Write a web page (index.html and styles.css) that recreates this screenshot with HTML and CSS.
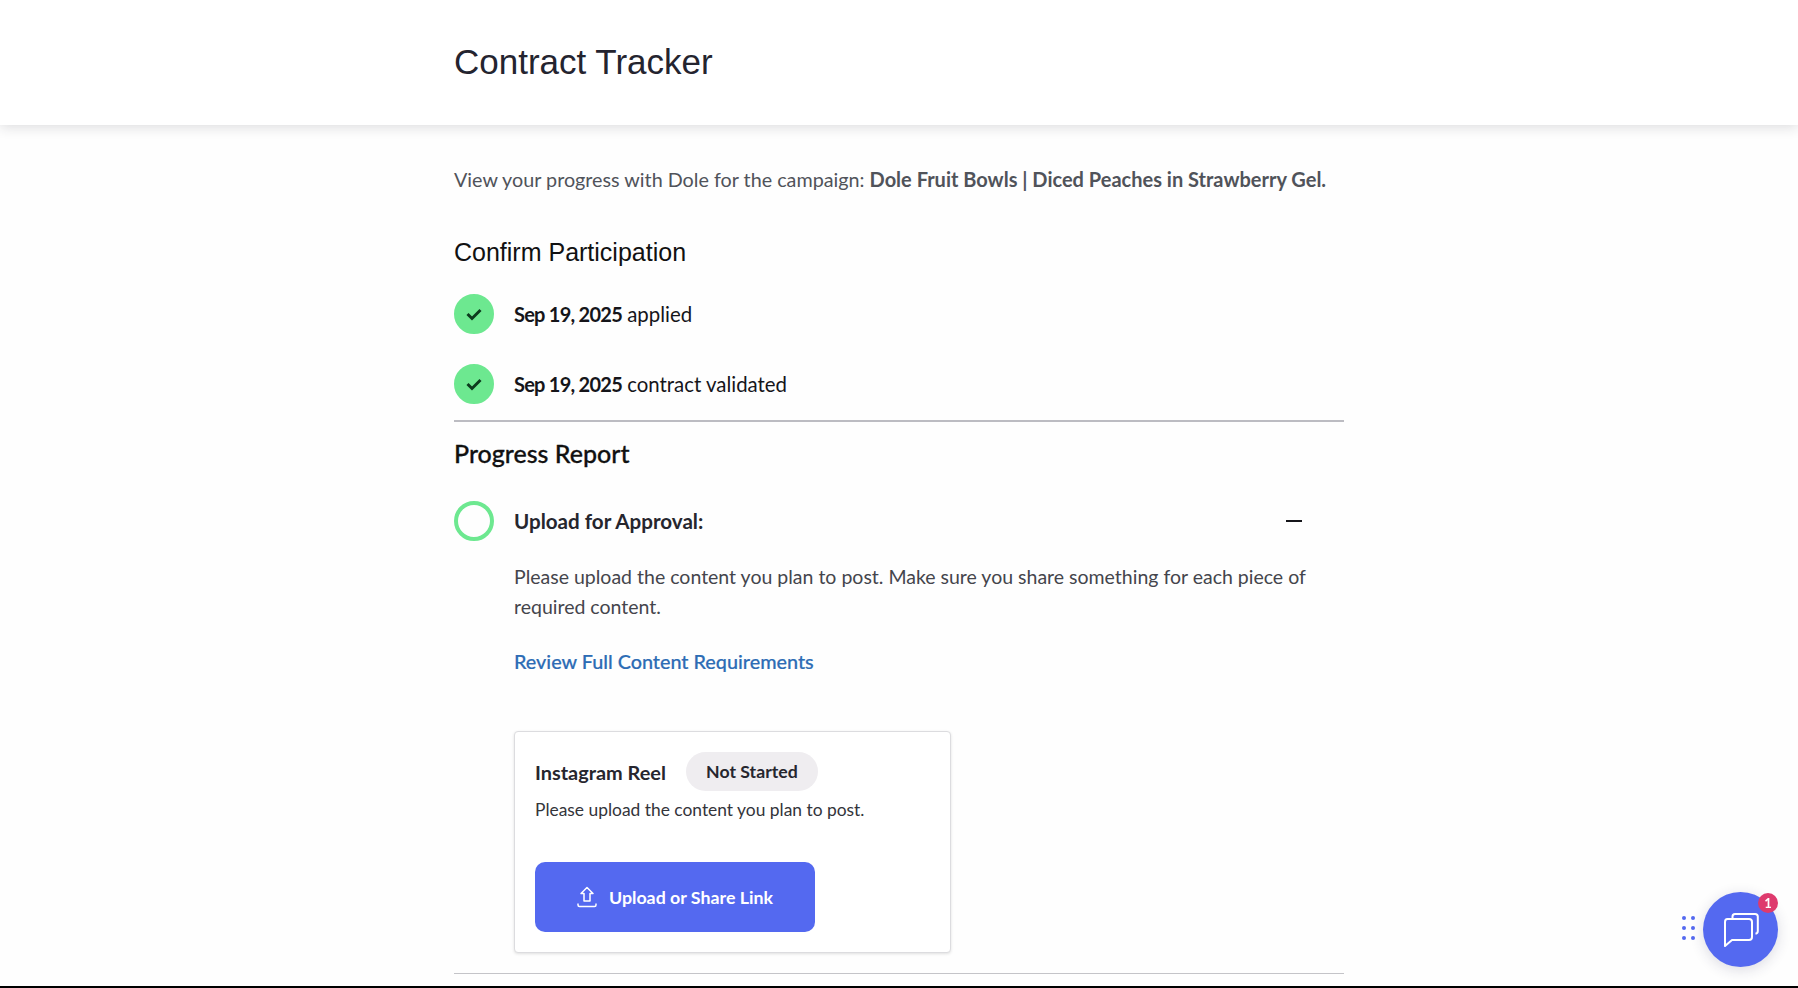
FILE: index.html
```html
<!DOCTYPE html>
<html lang="en">
<head>
    <meta charset="UTF-8">
    <meta name="viewport" content="width=device-width, initial-scale=1.0">
    <title>Contract Tracker</title>
    <link rel="stylesheet" href="styles.css">
</head>
<body>

    <div class="page">
        <div class="header">
            <h1>Contract Tracker</h1>
        </div>

        <div class="content">
            <p class="intro">View your progress with Dole for the campaign: <strong>Dole Fruit Bowls | Diced Peaches in Strawberry Gel.</strong></p>

            <h2 class="confirm-title">Confirm Participation</h2>

            <div class="step">
                <span class="circle done">
                    <svg width="18" height="14" viewBox="0 0 18 14"><path d="M2.500 7l4.500 4.500 8.500-8.500" fill="none" stroke="#0d3b1e" stroke-width="3"/></svg>
                </span>
                <span><b class="date">Sep 19, 2025</b> applied</span>
            </div>
            <div class="step step-second">
                <span class="circle done">
                    <svg width="18" height="14" viewBox="0 0 18 14"><path d="M2.500 7l4.500 4.500 8.500-8.500" fill="none" stroke="#0d3b1e" stroke-width="3"/></svg>
                </span>
                <span><b class="date">Sep 19, 2025</b> contract validated</span>
            </div>

            <hr class="divider">

            <h2 class="progress-title">Progress Report</h2>

            <div class="step step-open">
                <span class="circle"></span>
                <b class="step-name">Upload for Approval:</b>
                <span class="collapse"></span>
            </div>

            <div class="step-body">
                <p>Please upload the content you plan to post. Make sure you share something for each piece of required content.</p>
                <a class="req-link" href="#">Review Full Content Requirements</a>

                <div class="card">
                    <div class="card-top">
                        <span class="card-name">Instagram Reel</span>
                        <span class="pill">Not Started</span>
                    </div>
                    <div class="card-text">Please upload the content you plan to post.</div>
                    <button class="upload-btn">
                        <svg width="20" height="22" viewBox="0 0 20 22" fill="none" stroke="white" stroke-width="1.500" stroke-linejoin="round"><path d="M10 1.500L4 7.500H7V15H13V7.500H16Z"/><path d="M1 17.500V19c0 1 .5 1.500 1.500 1.500h15c1 0 1.500-.5 1.500-1.500v-1.500"/></svg>
                        Upload or Share Link
                    </button>
                </div>
            </div>

            <hr class="divider-thin">
        </div>

        <div class="bottom-bar"></div>
    </div>

    <div class="chat-handle">
        <i></i><i></i><i></i><i></i><i></i><i></i>
    </div>
    <div class="chat-button">
        <svg class="chat-icon" width="35" height="34" viewBox="0 0 35 34" fill="none" stroke="white" stroke-width="2" stroke-linejoin="round"><path d="M8.500 5V3.500C8.500 1.800 9.500 1 11 1H31C32.800 1 33.800 2 33.800 3.500V18C33.800 19.500 33 20.500 31.500 20.800"/><path d="M3.500 6H25C27 6 28 7 28 9V24C28 26 27 27 25 27H8L1 33V9C1 7 2 6 3.500 6Z"/></svg>
        <span class="chat-badge">1</span>
    </div>

</body>
</html>
```

FILE: styles.css
```css
body {
    font-family: "Lato", sans-serif;
    background-color: #fefefe;
    margin: 0;
    overflow: hidden;
}

.page {
    height: 100vh;
    display: flex;
    flex-direction: column;
}

/* Header */
.header {
    height: 125px;
    box-sizing: border-box;
    padding-left: 454px;
    padding-bottom: 2px;
    display: flex;
    align-items: center;
    background-color: white;
    box-shadow: 0 2px 12px rgba(40, 40, 50, 0.16);
    flex-shrink: 0;
}

.header h1 {
    margin: 0;
    font-family: "Liberation Sans", Arial, sans-serif;
    font-size: 35px;
    font-weight: 400;
    color: #24242f;
}

.content {
    flex: 1;
    width: 890px;
    margin-left: 454px;
}

.intro {
    margin: 39px 0 0;
    font-size: 19.750px;
    line-height: 30px;
    color: #50535a;
}

.intro strong {
    font-size: 20px;
    font-weight: 700;
}

.confirm-title {
    margin: 41px 0 0;
    font-family: "Liberation Sans", Arial, sans-serif;
    font-size: 25px;
    line-height: 32px;
    font-weight: 400;
    color: #111;
}

.progress-title {
    margin: 15px 0 0;
    font-size: 25px;
    line-height: 32px;
    font-weight: 500;
    color: #111;
    -webkit-text-stroke: 0.3px #111;
}

/* Steps */
.step {
    display: flex;
    align-items: center;
    gap: 20px;
    margin-top: 26px;
    font-size: 20.400px;
    color: #15151a;
}

.step-second {
    margin-top: 30px;
}

.step-open {
    margin-top: 32px;
}

.date {
    font-size: 20px;
    letter-spacing: -0.75px;
}

.step-name {
    font-size: 20.600px;
    color: #26262e;
}

.circle {
    width: 40px;
    height: 40px;
    box-sizing: border-box;
    border: 4px solid #6de890;
    border-radius: 50%;
    display: flex;
    align-items: center;
    justify-content: center;
    flex-shrink: 0;
}

.circle.done {
    background-color: #6de890;
}

.collapse {
    width: 16px;
    height: 2px;
    margin-left: auto;
    margin-right: 42px;
    background-color: #15151a;
}

.divider {
    margin: 16px 0 0;
    border: none;
    height: 2px;
    background-color: #bcbcc2;
}

.divider-thin {
    margin: 20px 0 0;
    border: none;
    height: 1px;
    background-color: #c4c4c8;
}

.step-body {
    margin-left: 60px;
}

.step-body p {
    margin: 21px 0 0;
    font-size: 19.500px;
    line-height: 30px;
    color: #44454c;
}

.req-link {
    display: block;
    margin-top: 24px;
    font-size: 19.800px;
    line-height: 30px;
    font-weight: 500;
    color: #2d6cb5;
    text-decoration: none;
    -webkit-text-stroke: 0.2px #2d6cb5;
}

/* Content card */
.card {
    width: 437px;
    margin-top: 55px;
    padding: 20px 20px 20px;
    box-sizing: border-box;
    background-color: white;
    border: 1px solid #dcdcdf;
    border-radius: 4px;
    box-shadow: 0 1px 3px rgba(0, 0, 0, 0.12);
}

.card-top {
    display: flex;
    align-items: center;
    gap: 20px;
}

.card-name {
    font-size: 19.900px;
    font-weight: 700;
    color: #26262e;
}

.pill {
    height: 39px;
    width: 132px;
    display: flex;
    align-items: center;
    justify-content: center;
    border-radius: 20px;
    background-color: #efedf0;
    font-size: 17.700px;
    font-weight: 700;
    color: #26262e;
}

.card-text {
    margin-top: 6px;
    font-size: 17.400px;
    line-height: 26px;
    color: #33343a;
}

.upload-btn {
    width: 280px;
    height: 70px;
    margin-top: 39px;
    display: flex;
    align-items: center;
    justify-content: center;
    gap: 12px;
    border: none;
    border-radius: 10px;
    background-color: #5469f0;
    color: white;
    font-family: "Lato", sans-serif;
    font-size: 17.800px;
    font-weight: 700;
}

.bottom-bar {
    height: 2px;
    background-color: #000;
    flex-shrink: 0;
}

/* Chat widget */
.chat-button {
    position: fixed;
    left: 1703px;
    top: 892px;
    width: 75px;
    height: 75px;
    display: flex;
    align-items: center;
    justify-content: center;
    border-radius: 50%;
    background-color: #5469f0;
    box-shadow: 0 3px 14px rgba(40, 40, 80, 0.16);
}

.chat-icon {
    margin-left: 2px;
}

.chat-badge {
    position: absolute;
    top: 1px;
    right: 0;
    width: 20px;
    height: 20px;
    display: flex;
    align-items: center;
    justify-content: center;
    border-radius: 50%;
    background-color: #de3a6d;
    color: white;
    font-size: 13px;
    font-weight: 700;
}

.chat-handle {
    position: fixed;
    left: 1682px;
    top: 916px;
    display: grid;
    grid-template-columns: 4px 4px;
    column-gap: 5px;
    row-gap: 6px;
}

.chat-handle i {
    width: 4px;
    height: 4px;
    border-radius: 50%;
    background-color: #5469f0;
}
```
